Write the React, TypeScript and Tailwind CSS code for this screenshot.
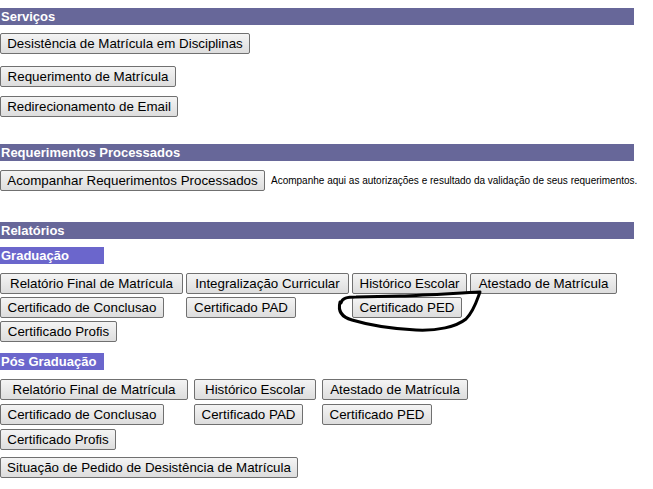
import React from "react";

function Header({ children, className = "" }: { children: React.ReactNode; className?: string }) {
  return (
    <div
      className={`h-[17px] w-[634px] bg-[#676799] pl-[1px] text-[13px] font-bold leading-[17px] text-white ${className}`}
    >
      {children}
    </div>
  );
}

function SubHeader({ children, className = "" }: { children: React.ReactNode; className?: string }) {
  return (
    <div
      className={`h-[17px] w-[104px] bg-[#6b66cc] pl-[1px] text-[13px] font-bold leading-[17px] text-white ${className}`}
    >
      {children}
    </div>
  );
}

function Btn({ children, w, className = "" }: { children: React.ReactNode; w: number; className?: string }) {
  return (
    <button
      type="button"
      style={{ width: w }}
      className={`flex h-[21px] items-center justify-center whitespace-nowrap rounded-[2px] border border-[#707070] bg-linear-to-b from-[#f4f4f4] to-[#dddddd] p-0 text-[13.333px] leading-none text-black ${className}`}
    >
      {children}
    </button>
  );
}

export default function App() {
  return (
    <div className="relative h-[489px] w-[653px] overflow-hidden bg-white font-['Liberation_Sans',Arial,sans-serif] text-black">
      <div className="pt-[8px]">
        <Header>Serviços</Header>
        <div className="mt-[8px] flex flex-col items-start">
          <Btn w={250}>Desistência de Matrícula em Disciplinas</Btn>
          <Btn w={176} className="mt-[12px]">
            Requerimento de Matrícula
          </Btn>
          <Btn w={178} className="mt-[9px]">
            Redirecionamento de Email
          </Btn>
        </div>

        <Header className="mt-[27px]">Requerimentos Processados</Header>
        <div className="mt-[9px] flex items-center">
          <Btn w={265}>Acompanhar Requerimentos Processados</Btn>
          <span className="ml-[6px] whitespace-nowrap text-[10px] leading-none">
            Acompanhe aqui as autorizações e resultado da validação de seus requerimentos.
          </span>
        </div>

        <Header className="mt-[31px]">Relatórios</Header>
        <SubHeader className="mt-[8px]">Graduação</SubHeader>
        <div className="mt-[9px] grid grid-cols-[186px_166px_118px_auto] gap-y-[3px]">
          <Btn w={183}>Relatório Final de Matrícula</Btn>
          <Btn w={163}>Integralização Curricular</Btn>
          <Btn w={115}>Histórico Escolar</Btn>
          <Btn w={147}>Atestado de Matrícula</Btn>
          <Btn w={164}>Certificado de Conclusao</Btn>
          <Btn w={110}>Certificado PAD</Btn>
          <Btn w={110}>Certificado PED</Btn>
          <div />
          <Btn w={117}>Certificado Profis</Btn>
        </div>

        <SubHeader className="mt-[11px]">Pós Graduação</SubHeader>
        <div className="mt-[9px] grid grid-cols-[194px_128px_auto] gap-y-[4px]">
          <Btn w={188}>Relatório Final de Matrícula</Btn>
          <Btn w={122}>Histórico Escolar</Btn>
          <Btn w={146}>Atestado de Matrícula</Btn>
          <Btn w={164}>Certificado de Conclusao</Btn>
          <Btn w={109}>Certificado PAD</Btn>
          <Btn w={110}>Certificado PED</Btn>
          <Btn w={116}>Certificado Profis</Btn>
        </div>
        <Btn w={298} className="mt-[7px]">
          Situação de Pedido de Desistência de Matrícula
        </Btn>
      </div>

      <svg
        className="pointer-events-none absolute left-0 top-0"
        width={653}
        height={489}
        viewBox="0 0 653 489"
        fill="none"
      >
        <path
          d="M341 303 C342 298 347 297 356 297 L400 296 C430 295 458 293 480 292 C477 300 474 311 466 319 C456 327 437 331 416 330 C396 329 372 326 352 320 C341 317 338 310 340 302"
          stroke="#000"
          strokeWidth={3}
          strokeLinecap="round"
          strokeLinejoin="round"
        />
      </svg>
    </div>
  );
}
